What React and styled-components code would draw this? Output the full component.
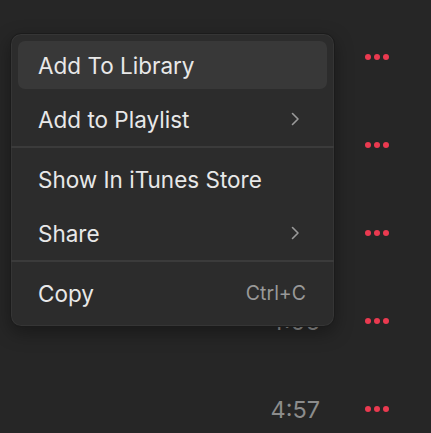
import React from "react";
import styled, { createGlobalStyle } from "styled-components";

const GlobalStyle = createGlobalStyle`
  html, body {
    margin: 0;
    padding: 0;
    background: #262626;
  }
  body {
    font-family: Inter, "Noto Sans", "Liberation Sans", sans-serif;
    -webkit-font-smoothing: antialiased;
  }
`;

const tracks = ["3:41", "4:12", "3:58", "4:06", "4:57"];

const menuItems = [
  { label: "Add To Library", active: true },
  { label: "Add to Playlist", submenu: true, divider: true },
  { label: "Show In iTunes Store" },
  { label: "Share", submenu: true, divider: true },
  { label: "Copy", shortcut: "Ctrl+C" },
];

const Page = styled.div`
  position: relative;
  width: 431px;
  height: 433px;
  overflow: hidden;
  background: #262626;
`;

const TrackList = styled.div`
  display: flex;
  flex-direction: column;
  padding-top: 13px;
`;

const TrackRow = styled.div`
  height: 88px;
  display: flex;
  align-items: center;
  justify-content: flex-end;
  padding-right: 42px;
`;

const Time = styled.span`
  font-size: 23.5px;
  color: #8c8c8c;
  margin-right: 45px;
`;

const Dots = styled.div`
  display: flex;
  gap: 3px;
  & > span {
    width: 6px;
    height: 6px;
    border-radius: 50%;
    background: #ea3a50;
  }
`;

const Menu = styled.div`
  position: absolute;
  left: 10px;
  top: 33px;
  width: 325px;
  box-sizing: border-box;
  padding: 7px 0 9px;
  background: #2c2c2c;
  border: 1px solid #1b1b1b;
  border-radius: 11px;
  box-shadow: 0 6px 18px rgba(0, 0, 0, 0.35), inset 0 0 0 1px #353535;
  display: flex;
  flex-direction: column;
`;

const Item = styled.div`
  box-sizing: border-box;
  height: 48px;
  margin: 0 7px;
  padding: 0 21px 0 20px;
  display: flex;
  align-items: center;
  justify-content: space-between;
  border-radius: 7px;
  background: ${(p) => (p.$active ? "#383838" : "transparent")};
  color: #e8e8e8;
  font-size: 22.5px;
  & + & {
    margin-top: 6px;
  }
`;

const Shortcut = styled.span`
  font-size: 19.5px;
  color: #999999;
`;

const Separator = styled.div`
  height: 2px;
  background: #3b3b3b;
  margin: 3px 0 7px;
`;

const Chevron = () => (
  <svg width="9" height="14" viewBox="0 0 9 14" style={{ marginRight: 6 }}>
    <path d="M1.5 1.5 L7 7 L1.5 12.5" fill="none" stroke="#9a9a9a" strokeWidth="1.6" strokeLinecap="round" strokeLinejoin="round" />
  </svg>
);

export default function App() {
  return (
    <Page>
      <GlobalStyle />
      <TrackList>
        {tracks.map((t, i) => (
          <TrackRow key={i}>
            <Time>{t}</Time>
            <Dots>
              <span />
              <span />
              <span />
            </Dots>
          </TrackRow>
        ))}
      </TrackList>
      <Menu>
        {menuItems.map((m) => (
          <React.Fragment key={m.label}>
            <Item $active={m.active}>
              <span>{m.label}</span>
              {m.submenu && <Chevron />}
              {m.shortcut && <Shortcut>{m.shortcut}</Shortcut>}
            </Item>
            {m.divider && <Separator />}
          </React.Fragment>
        ))}
      </Menu>
    </Page>
  );
}
